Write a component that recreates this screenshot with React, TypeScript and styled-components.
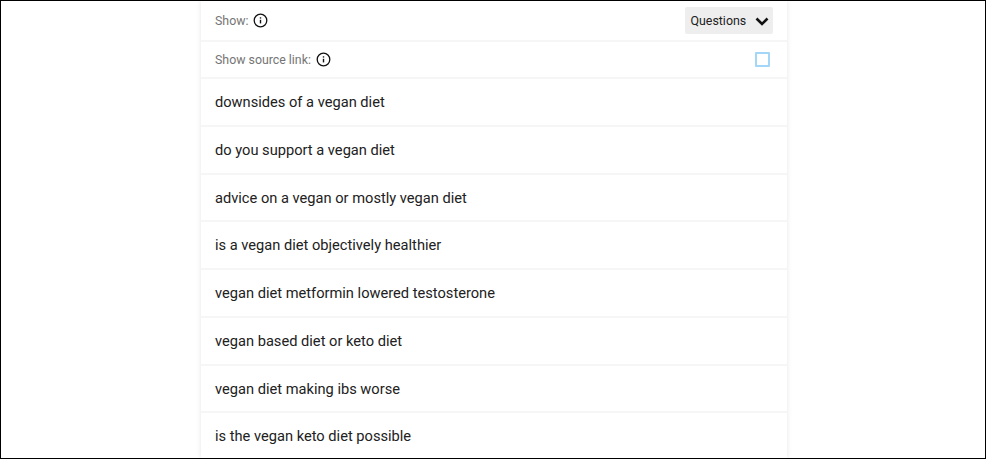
import React from 'react'
import styled, { createGlobalStyle } from 'styled-components'

const GlobalStyle = createGlobalStyle`
  html, body {
    margin: 0;
    height: 100%;
    background: #fff;
    overflow: hidden;
  }
  body {
    font-family: Roboto, "Liberation Sans", sans-serif;
  }
`

const Frame = styled.div`
  box-sizing: border-box;
  width: 986px;
  height: 459px;
  border: 1px solid #000;
  overflow: hidden;
  display: flex;
  justify-content: center;
`

const Card = styled.section`
  width: 586px;
  margin-left: 2px;
  flex: none;
  background: #fff;
  box-shadow: 0 0 5px rgba(0, 0, 0, 0.1);
`

const SettingRow = styled.div<{ $height: number }>`
  box-sizing: border-box;
  height: ${(p) => p.$height}px;
  display: flex;
  align-items: center;
  justify-content: space-between;
  padding: 0 14px;
  border-bottom: 2px solid #f6f6f6;
`

const SettingLabel = styled.div`
  display: flex;
  align-items: center;
  gap: 5px;
  font-size: 12.35px;
  color: #757575;
`

const Dropdown = styled.button`
  display: flex;
  align-items: center;
  justify-content: space-between;
  width: 88px;
  height: 27px;
  box-sizing: border-box;
  padding: 0 3px 0 5.5px;
  border: 0;
  border-radius: 2px;
  background: #eeeeee;
  color: #212121;
  font: 400 12.4px Roboto, "Liberation Sans", sans-serif;
`

const Chevron = styled.svg`
  display: block;
  width: 16px;
  height: 16px;
  fill: none;
  stroke: #111;
  stroke-width: 2.6;
`

const Checkbox = styled.span`
  box-sizing: border-box;
  display: block;
  width: 15px;
  height: 15px;
  margin-right: 3px;
  border: 2px solid #a4d6f8;
  border-radius: 1px;
`

const QuestionRow = styled.div`
  box-sizing: border-box;
  height: 47.75px;
  display: flex;
  align-items: center;
  padding: 0.4px 14px 0;
  border-bottom: 2px solid #f6f6f6;
  font-size: 14.65px;
  color: #212121;
`

const InfoIcon = () => (
  <svg width="15" height="15" viewBox="0 0 15 15" fill="none" stroke="#111" aria-hidden="true">
    <circle cx="7.5" cy="7.5" r="6.3" strokeWidth="1.3" />
    <path d="M7.5 6.8v3.6" strokeWidth="1.4" />
    <path d="M7.5 4.3v1.3" strokeWidth="1.4" />
  </svg>
)

const questions = [
  'downsides of a vegan diet',
  'do you support a vegan diet',
  'advice on a vegan or mostly vegan diet',
  'is a vegan diet objectively healthier',
  'vegan diet metformin lowered testosterone',
  'vegan based diet or keto diet',
  'vegan diet making ibs worse',
  'is the vegan keto diet possible',
]

export default function App() {
  return (
    <>
      <GlobalStyle />
      <Frame>
        <Card>
          <SettingRow $height={41}>
            <SettingLabel>
              Show: <InfoIcon />
            </SettingLabel>
            <Dropdown>
              Questions
              <Chevron viewBox="0 0 16 16" aria-hidden="true">
                <path d="M2.5 5.5 8 11l5.5-5.5" />
              </Chevron>
            </Dropdown>
          </SettingRow>
          <SettingRow $height={37}>
            <SettingLabel>
              Show source link: <InfoIcon />
            </SettingLabel>
            <Checkbox />
          </SettingRow>
          {questions.map((q) => (
            <QuestionRow key={q}>{q}</QuestionRow>
          ))}
        </Card>
      </Frame>
    </>
  )
}
